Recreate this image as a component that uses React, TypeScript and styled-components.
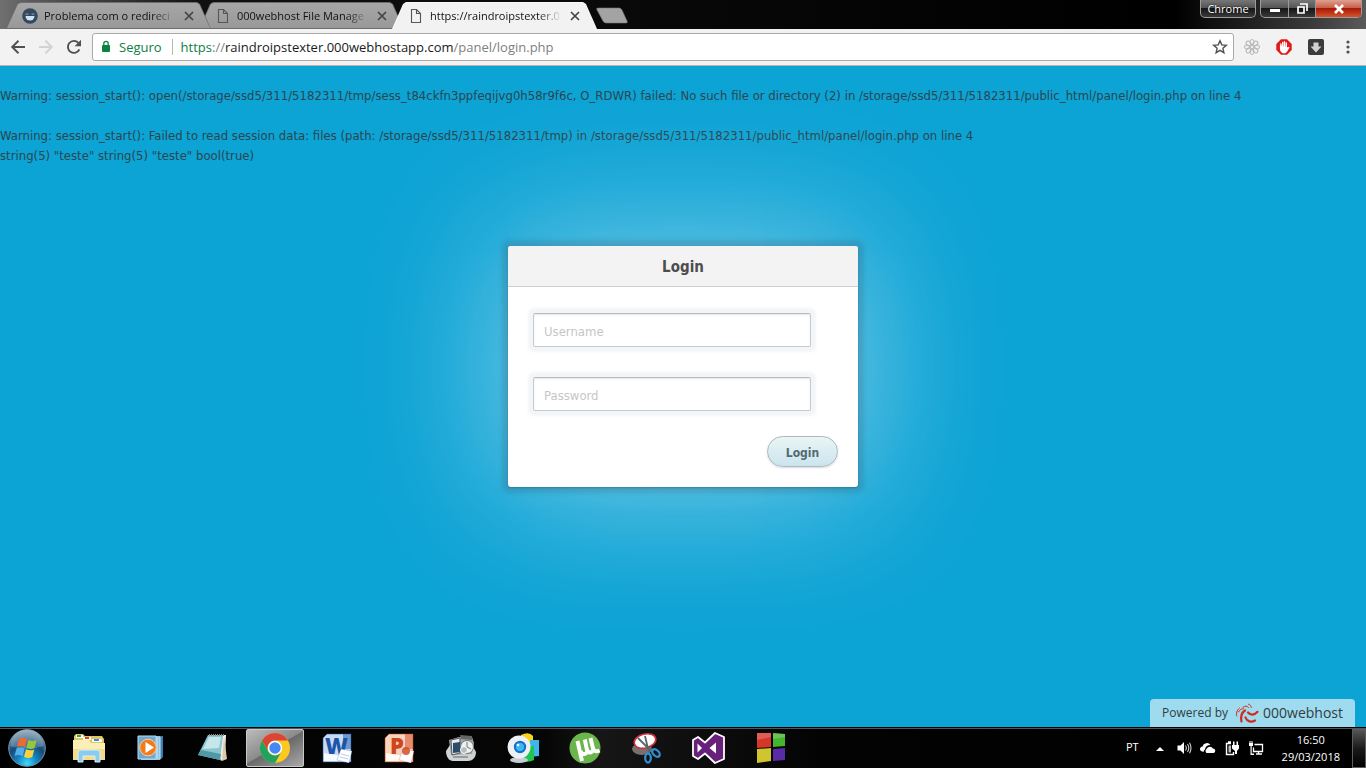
import React from "react";
import styled, { createGlobalStyle, css } from "styled-components";

const ui = `"Open Sans", "Noto Sans", sans-serif`;
const body = `"DejaVu Sans Condensed", "DejaVu Sans", sans-serif`;

const GlobalStyle = createGlobalStyle`
  *, *::before, *::after { box-sizing: border-box; }
  body { margin: 0; background: #0ca3d5; }
  button, input { font: inherit; }
  button { border: 0; padding: 0; background: none; cursor: pointer; }
  svg { display: block; flex: none; }
`;

const Screen = styled.div`
  display: flex;
  flex-direction: column;
  min-height: 100vh;
  overflow: hidden;
`;

/* ---------- Browser window frame ---------- */

const TitleBar = styled.header`
  display: flex;
  align-items: flex-start;
  height: 29px;
  padding: 0 4px 0 6px;
  font: 11px/16px ${ui};
  background: linear-gradient(90deg, #707070 0, #5c5c5c 30px, #111 200px, #050505 60%, #000 86%, #3a3a3a 96%, #5a5a5a 100%);
`;

const TabStrip = styled.div`
  display: flex;
  flex: 1;
  min-width: 0;
`;

const Tab = styled.div<{ $active?: boolean; $level: number }>`
  position: relative;
  z-index: ${(p) => p.$level};
  display: flex;
  align-items: center;
  gap: 6px;
  width: 205px;
  height: 27px;
  margin: 2px -12px 0 0;
  padding: 0 15px 0 16px;
  color: #111;
  background: ${(p) => (p.$active ? "#f9f9f9" : "#6d6d6d")};
  clip-path: polygon(0 100%, 11px 2px, 14px 0, calc(100% - 14px) 0, calc(100% - 11px) 2px, 100% 100%);

  &::before {
    content: "";
    position: absolute;
    z-index: -1;
    inset: 1px 1px ${(p) => (p.$active ? "0" : "1px")} 1px;
    background: ${(p) => (p.$active ? "#f2f2f2" : "linear-gradient(#a6a6a6, #999)")};
    clip-path: polygon(0 100%, 11px 1px, 14px 0, calc(100% - 14px) 0, calc(100% - 11px) 1px, 100% 100%);
  }
`;

const TabTitle = styled.span`
  flex: 1;
  min-width: 0;
  overflow: hidden;
  white-space: nowrap;
  mask-image: linear-gradient(90deg, #000 calc(100% - 24px), transparent);
`;

const TabClose = styled.button`
  display: grid;
  place-items: center;
  width: 14px;
  height: 16px;
`;

const NewTab = styled.button`
  width: 34px;
  height: 17px;
  margin: 7px 0 0 10px;
`;

const WindowButtons = styled.div`
  display: flex;
  gap: 4px;
`;

const glass = css`
  border: 1px solid #9c9c9c;
  border-top: 0;
  border-radius: 0 0 5px 5px;
  background: linear-gradient(#777 0, #555 45%, #161616 50%, #3a3a3a 100%);
`;

const Profile = styled.button`
  ${glass}
  width: 56px;
  height: 18px;
  color: #fff;
  text-shadow: 0 0 2px #000;
`;

const Caption = styled.div`
  ${glass}
  display: flex;
  height: 18px;
  overflow: hidden;
`;

const CaptionButton = styled.button<{ $close?: boolean }>`
  display: grid;
  place-items: center;
  width: ${(p) => (p.$close ? 46 : 27)}px;
  background: ${(p) => (p.$close ? "linear-gradient(#e0a090 0, #c9604c 45%, #a81a08 50%, #d4542c 100%)" : "none")};

  & + & {
    border-left: 1px solid #999;
  }
`;

const Toolbar = styled.nav`
  display: flex;
  align-items: center;
  height: 37px;
  padding: 0 10px 1px;
  background: #f2f2f2;
  border-bottom: 1px solid #b6b4b6;
`;

const NavButton = styled.button`
  display: grid;
  place-items: center;
  width: 16px;
  height: 24px;
  margin-right: 12px;

  &:nth-of-type(3) {
    margin-right: 10px;
  }
`;

const Omnibox = styled.div`
  display: flex;
  flex: 1;
  align-items: center;
  min-width: 0;
  height: 28px;
  padding: 0 5px 0 8px;
  font: 13px/20px ${ui};
  color: #0b8043;
  background: #fff;
  border: 1px solid #a9a9a9;
  border-radius: 3px;
`;

const Secure = styled.span`
  margin-left: 8px;
  padding-right: 10px;
  line-height: 16px;
  border-right: 1px solid #b5b5b5;
`;

const Url = styled.div`
  flex: 1;
  min-width: 0;
  overflow: hidden;
  margin-left: 8px;
  white-space: nowrap;
  color: #808080;
`;

const Scheme = styled.span`
  color: #0b8043;
`;

const Host = styled.span`
  color: #1a1a1a;
`;

const Extensions = styled.div`
  display: flex;
  align-items: center;
  gap: 16px;
  margin-left: 10px;
`;

const IconButton = styled.button`
  display: grid;
  place-items: center;
  width: 16px;
  height: 16px;
`;

/* ---------- Web page ---------- */

const Page = styled.main`
  display: flex;
  flex: 1;
  flex-direction: column;
  background: #0ca3d5;
  font: 13px/20px ${body};
  color: #333;
`;

const Warnings = styled.div`
  padding-top: 20px;
  color: #2a4650;
`;

const Message = styled.p`
  margin: 0 0 20px;

  &:last-child {
    margin: 0;
  }
`;

const Card = styled.form`
  align-self: center;
  width: 350px;
  max-width: 100%;
  margin: 80px 0 40px;
  background: #fff;
  border-radius: 3px;
  box-shadow: 0 1px 2px rgba(0, 0, 0, 0.2), 0 0 4px 6px rgba(60, 60, 80, 0.17),
    0 0 140px 12px rgba(255, 255, 255, 0.45);
`;

const CardTitle = styled.h1`
  margin: 0;
  padding: 11px 0 9px;
  font-size: 15px;
  line-height: 20px;
  text-align: center;
  color: #4d4d4d;
  background: #f3f3f3;
  border-bottom: 1px solid #cfcfcf;
  border-radius: 3px 3px 0 0;
`;

const Fields = styled.div`
  display: flex;
  flex-direction: column;
  gap: 30px;
  padding: 26px 47px 25px 25px;
`;

const Field = styled.input`
  width: 100%;
  height: 34px;
  padding: 2px 10px 0;
  color: #444;
  background: #fff;
  border: 1px solid #c4ccd1;
  border-top-color: #b5bbbf;
  border-radius: 2px;
  outline: 0;
  box-shadow: 0 0 3px 5px #f3f5f6, inset 0 1px 2px rgba(0, 0, 0, 0.1);

  &::placeholder {
    color: #c6c6c6;
    opacity: 1;
  }
`;

const Actions = styled.div`
  display: flex;
  justify-content: flex-end;
  padding: 0 20px 20px;
`;

const Submit = styled.button`
  width: 71px;
  height: 31px;
  padding-top: 2px;
  font-size: 12px;
  font-weight: bold;
  color: #526b75;
  background: linear-gradient(#e9f5f5, #cce4ee);
  border: 1px solid #adb9be;
  border-radius: 16px;
  box-shadow: 0 1px 2px rgba(0, 0, 0, 0.15);
`;

const HostBadge = styled.a`
  display: flex;
  align-items: center;
  align-self: flex-end;
  height: 28px;
  margin: auto 11px 0 0;
  padding: 0 12px;
  font: 12px/20px ${ui};
  color: #333c42;
  text-decoration: none;
  background: #9edbee;
  border-radius: 4px 4px 0 0;

  svg {
    margin: 0 4px 0 7px;
  }
`;

const Brand = styled.span`
  font-size: 14px;
`;

/* ---------- Taskbar ---------- */

const Taskbar = styled.footer`
  display: flex;
  align-items: center;
  height: 41px;
  font: 11px/17px ${ui};
  color: #fff;
  background: linear-gradient(90deg, #000 0, #060606 40%, #161616 44%, #030303 60%, #000 100%);
  border-top: 1px solid #000;
  box-shadow: inset 0 1px 0 #555;
`;

const StartButton = styled.button`
  display: grid;
  place-items: center;
  width: 54px;
  height: 40px;
  margin-right: 6px;
`;

const Apps = styled.div`
  display: flex;
  flex: 1;
  gap: 4px;
  height: 38px;
`;

const AppButton = styled.button<{ $active?: boolean }>`
  display: grid;
  place-items: center;
  width: 58px;
  border: 1px solid ${(p) => (p.$active ? "#c9c9c9" : "transparent")};
  border-radius: 2px;
  background: ${(p) => (p.$active ? "linear-gradient(150deg, #bbb 0, #8b8b8b 48%, #696969 50%, #a9a9a9 100%)" : "none")};
`;

const Tray = styled.div`
  display: flex;
  align-items: center;
  gap: 8px;
  margin-right: 12px;
`;

const Language = styled.span`
  margin: 0 5px 4px 0;
`;

const Clock = styled.time`
  margin-left: 10px;
  text-align: center;
`;

const ShowDesktop = styled.button`
  width: 14px;
  height: 39px;
  border: 1px solid #5c5c5c;
  background: linear-gradient(#555, #1a1a1a 50%, #000);
`;

/* ---------- Drawings ---------- */

const CloseIcon = () => (
  <svg width="10" height="10" viewBox="0 0 10 10">
    <path d="M1 1l8 8M9 1l-8 8" stroke="#444" strokeWidth="1.7" />
  </svg>
);

const FileIcon = () => (
  <svg width="16" height="16" viewBox="0 0 16 16">
    <path d="M3.500 1.500h5l4 4v9h-9zM8.500 1.500v4h4" fill="none" stroke="#555" strokeWidth="1.1" />
  </svg>
);

const SmileIcon = () => (
  <svg width="16" height="16" viewBox="0 0 16 16">
    <circle cx="8" cy="8" r="7.800" fill="#34495e" />
    <path d="M3.500 8h9a4.500 4.500 0 0 1-9 0z" fill="#cfe4f2" />
    <path d="M3.500 6.200h9" stroke="#7d93a6" strokeWidth="1.200" strokeDasharray="3 3" />
  </svg>
);

const BackIcon = () => (
  <svg width="16" height="16" viewBox="0 0 16 16">
    <path d="M15 8H2.500M8.500 1.800L2.200 8l6.300 6.200" fill="none" stroke="#505050" strokeWidth="1.9" />
  </svg>
);

const ForwardIcon = () => (
  <svg width="16" height="16" viewBox="0 0 16 16">
    <path d="M1 8h12.500M7.500 1.800L13.800 8l-6.300 6.200" fill="none" stroke="#d2d2d2" strokeWidth="1.9" />
  </svg>
);

const ReloadIcon = () => (
  <svg width="16" height="16" viewBox="0 0 16 16">
    <path d="M13.400 10.300A6 6 0 1 1 12.400 3.900" fill="none" stroke="#505050" strokeWidth="1.9" />
    <path d="M15 .8v6.400H8.600z" fill="#505050" />
  </svg>
);

const LockIcon = () => (
  <svg width="10" height="13" viewBox="0 0 10 13">
    <rect x="1" y="5" width="8" height="7" rx="1" fill="#0b8043" />
    <path d="M2.800 5.500V3.600a2.200 2.200 0 0 1 4.400 0v1.900" fill="none" stroke="#0b8043" strokeWidth="1.3" />
  </svg>
);

const StarIcon = () => (
  <svg width="16" height="16" viewBox="0 0 16 16">
    <path
      d="M8 1.800l1.800 4.100 4.500.4-3.400 3 1 4.400L8 11.400l-3.900 2.300 1-4.400-3.400-3 4.500-.4z"
      fill="none"
      stroke="#505050"
      strokeWidth="1.4"
    />
  </svg>
);

const FlowerIcon = () => (
  <svg width="16" height="16" viewBox="0 0 16 16">
    {[0, 45, 90, 135, 180, 225, 270, 315].map((a) => (
      <ellipse key={a} cx="8" cy="3" rx="2.100" ry="2.500" fill="none" stroke="#b5b5b5" transform={`rotate(${a} 8 8)`} />
    ))}
    <circle cx="8" cy="8" r="1.800" fill="#eee" stroke="#b5b5b5" />
  </svg>
);

const HandIcon = () => (
  <svg width="16" height="16" viewBox="0 0 16 16">
    <path d="M5 .3h6L15.700 5v6L11 15.700H5L.3 11V5z" fill="#e01b1b" />
    <path
      d="M4.500 6.500v3C4.500 12 6 13.800 8 13.800c1.400 0 2.300-.7 3-2l1.800-3.300"
      fill="#fff"
      stroke="#fff"
      strokeWidth="1.200"
      strokeLinecap="round"
    />
    <path d="M4.900 9V5M6.700 9V3.400M8.500 9V2.800M10.300 10V4" stroke="#fff" strokeWidth="1.400" strokeLinecap="round" />
  </svg>
);

const DownloadIcon = () => (
  <svg width="16" height="16" viewBox="0 0 16 16">
    <rect width="16" height="16" rx="2" fill="#3b3b3b" />
    <path d="M5.500 3.500h5v4h3L8 13.500 2.500 7.500h3z" fill="#d4d4d4" />
  </svg>
);

const MenuIcon = () => (
  <svg width="16" height="16" viewBox="0 0 16 16" fill="#505050">
    <circle cx="8" cy="3" r="1.6" />
    <circle cx="8" cy="8" r="1.6" />
    <circle cx="8" cy="13" r="1.6" />
  </svg>
);

const HostLogo = () => (
  <svg width="24" height="20" viewBox="0 0 24 20" fill="none" stroke="#d42a1d" strokeLinecap="round">
    <path d="M4.500 5C1.500 7.500 1 10.500 1.800 13" strokeWidth="1" />
    <path d="M10 7.500C6.800 9.500 5.300 13 6.500 18.500" strokeWidth="2.200" />
    <path d="M10.500 14.500c1.500 4.200 6 5.200 9.500 3" strokeWidth="2.200" />
    <path d="M13 9.500c2.500 3 6.500 2.700 9.500-.7" strokeWidth="2.200" />
    <path d="M8 4.200c2-1.500 4-1.500 5.500.3M13.500 1.200c1.600.3 2.600 1.500 2.800 3.300" strokeWidth="1" />
    <path d="M3.500 9c1-2.300 2.800-3.300 5-3.300" strokeWidth="1" />
  </svg>
);

const StartOrb = () => (
  <svg width="40" height="40" viewBox="0 0 40 40">
    <defs>
      <radialGradient id="orb" cx="50%" cy="92%" r="90%">
        <stop offset="0" stopColor="#3fdcff" />
        <stop offset=".3" stopColor="#1386c4" />
        <stop offset=".6" stopColor="#164a78" />
        <stop offset="1" stopColor="#7f9db2" />
      </radialGradient>
    </defs>
    <circle cx="20" cy="20" r="18.300" fill="url(#orb)" stroke="#7793a6" />
    <path d="M3.500 18a16.500 16.500 0 0 1 33 0c-9 3-22 4-33 0z" fill="#fff" opacity=".22" />
    <path d="M12 11c3-1.600 5.600-1.300 8 .2l-2 8c-2.600-1.400-5-1.600-8-.4z" fill="#ee6a30" />
    <path d="M21.300 12c3 1.500 5.500 1.400 8.500 0l-2.200 8c-2.900 1.300-5.300 1.200-8.200-.2z" fill="#93c83d" />
    <path d="M9.600 20.200c3-1.200 5.400-1 8 .4l-2 7.600c-2.500-1.400-5-1.500-8-.3z" fill="#58aeea" />
    <path d="M19 21.200c2.800 1.400 5.400 1.500 8.300.2l-2 7.700c-3 1.300-5.500 1.200-8.300-.3z" fill="#fdd23c" />
  </svg>
);

const ExplorerIcon = () => (
  <svg width="34" height="32" viewBox="0 0 34 32">
    <path d="M2 4l2-2h7l2 2h17l2 3v20H2z" fill="#e3c462" />
    <path d="M4 3h7v3H4z" fill="#fff" />
    <path d="M5 3h4v2H5z" fill="#2aa84a" />
    <path d="M11 5h8v3h-8z" fill="#fff" />
    <path d="M13 5h4v2h-4z" fill="#d9432b" />
    <path d="M20 7h10v3H20z" fill="#fff" />
    <path d="M22 7h5v2h-5z" fill="#3497d3" />
    <path d="M1 8h16l2 3h14v17H1z" fill="#fbefb5" />
    <path d="M1 17h32v11H1z" fill="#f2dc8a" />
    <path d="M6 30v-9q0-3 3-3h16q3 0 3 3v9h-5v-6H11v6z" fill="#8dcbed" stroke="#d7effb" />
  </svg>
);

const PlayerIcon = () => (
  <svg width="30" height="30" viewBox="0 0 30 30">
    <path d="M8 3h19v21l-3 3H8z" fill="#3a7fae" />
    <path d="M5 3h19v24H5z" fill="#8fc4e4" />
    <path d="M21 4v22M24 4v22" stroke="#cfe7f5" />
    <path d="M2 3h18v23H2z" fill="#6fa9cf" stroke="#b8dcef" />
    <circle cx="12" cy="14.500" r="8.300" fill="#f07c1c" stroke="#fbd0a2" />
    <path d="M9.500 9v11l8.500-5.500z" fill="#fff" />
  </svg>
);

const NotesIcon = () => (
  <svg width="32" height="30" viewBox="0 0 32 30">
    <path d="M12 2h17l-1 23-4 3z" fill="#eeeee8" />
    <path d="M27 4l3 22-5 2z" fill="#d8cda6" />
    <path d="M11 2h15l-3 25L1 22z" fill="#8cc5ce" />
    <path d="M12 4h12l-2 11-16 1z" fill="#c5e7ea" />
    <path d="M1 22l22 5 1-6L4 17z" fill="#4f98a6" />
    <path d="M12 2h16" stroke="#888" strokeWidth="2" strokeDasharray="1 1" />
  </svg>
);

const ChromeIcon = () => (
  <svg width="32" height="32" viewBox="0 0 32 32">
    <circle cx="16" cy="16" r="15" fill="#fbc91f" />
    <path d="M3 8.500A15 15 0 0 1 29 8.500H16a7.500 7.500 0 0 0-6.500 11.200z" fill="#dc4437" />
    <path d="M3 8.500a15 15 0 0 0 13 22.500l6.500-11.300a7.500 7.500 0 0 1-13 0z" fill="#1ea361" />
    <circle cx="16" cy="16" r="7.200" fill="#fff" />
    <circle cx="16" cy="16" r="5.700" fill="#4587f3" />
  </svg>
);

const OfficeIcon = ({ letter, color, pale }: { letter: string; color: string; pale: string }) => (
  <svg width="30" height="30" viewBox="0 0 30 30">
    <path d="M5 1h24v28H1V5z" fill={pale} stroke={color} strokeOpacity=".5" />
    <path d="M21 1h8v15h-8z" fill={color} opacity=".5" />
    <path d="M2 20l18 3v5H2z" fill="#fff" opacity=".85" />
    <text x={letter === "W" ? 3 : 6} y="21" fontFamily="Open Sans, sans-serif" fontSize="22" fontWeight="800" fill={color}>
      {letter}
    </text>
    <path d="M19 16l11 2-3 12-12-3z" fill="#fff" stroke={color} strokeOpacity=".25" />
    {letter === "P" ? (
      <circle cx="22" cy="18" r="4" fill={color} opacity=".8" />
    ) : (
      <path d="M18 24l8 2M19 21l8 2" stroke={color} strokeOpacity=".3" />
    )}
  </svg>
);

const CameraIcon = () => (
  <svg width="32" height="30" viewBox="0 0 32 30">
    <path d="M1 18l4-6h22l4 7c0 6-4 9-8 9H8c-4 0-7-4-7-10z" fill="#cfd3d4" />
    <path d="M4 7l10-3h13l2 6-2 11-21 1z" fill="#9da5a8" />
    <path d="M6 7l9-2v15l-8 2z" fill="#e9eced" stroke="#555" />
    <path d="M8 10l7-1 1 10-8 1z" fill="#2d4b6b" />
    <circle cx="22" cy="14" r="6.500" fill="#eef0f0" stroke="#777" />
    <circle cx="19" cy="17" r="3.500" fill="#b5bec2" stroke="#fff" />
    <path d="M15 2l12 1v4l-11-1z" fill="#666" />
    <path d="M22 9v5l4 2" fill="none" stroke="#777" />
    <path d="M8 24h15" stroke="#858c8f" strokeWidth="1.500" />
  </svg>
);

const WebcamIcon = () => (
  <svg width="34" height="32" viewBox="0 0 34 32">
    <path d="M15 3q8-4 12 1v11H15z" fill="#fbd21d" />
    <path d="M24 8h9v16l-9 1z" fill="#3fb5e8" />
    <path d="M18 14h10v14q-5 3-12 1z" fill="#21c44c" />
    <ellipse cx="13" cy="28" rx="9" ry="3" fill="#c5cdd3" />
    <circle cx="13" cy="15" r="11.500" fill="#edf1f4" />
    <circle cx="14" cy="15" r="6.200" fill="#1a70c9" />
    <circle cx="14" cy="15" r="4" fill="#3bb9f7" />
    <circle cx="12" cy="13" r="1.300" fill="#fff" />
  </svg>
);

const TorrentIcon = () => (
  <svg width="32" height="32" viewBox="0 0 32 32">
    <circle cx="16" cy="16" r="15.500" fill="#6ab54c" />
    <path
      d="M8.500 9L13 29M11.500 19c1 4.500 7.500 4 6.500-1L15.800 7.500M18 18c1.500 4 7 2.500 6-1.500L21.500 6M24 16c.8 3.500 3.500 4 6.500 2.500"
      fill="none"
      stroke="#fff"
      strokeWidth="4"
    />
  </svg>
);

const SnipIcon = () => (
  <svg width="32" height="32" viewBox="0 0 32 32">
    <ellipse cx="11" cy="17" rx="10" ry="6" fill="#77706e" />
    <ellipse cx="14" cy="9" rx="11" ry="7" transform="rotate(-14 14 9)" fill="#fff" stroke="#c9303a" strokeWidth="1.6" />
    <path d="M7 6l14 14M14 4l4 17" stroke="#59666f" strokeWidth="1.8" />
    <ellipse cx="17" cy="26" rx="2.800" ry="4.500" fill="none" stroke="#2f8fd0" strokeWidth="2.3" />
    <ellipse cx="25" cy="21" rx="2.800" ry="4.500" transform="rotate(-45 25 21)" fill="none" stroke="#2f8fd0" strokeWidth="2.3" />
  </svg>
);

const StudioIcon = () => (
  <svg width="34" height="32" viewBox="0 0 34 32">
    <path
      d="M23 1l9 4v22l-9 4-10-9.500L6 27l-5-3V8l5-3 7 5.500z"
      fill="#68217a"
      stroke="#fff"
      strokeWidth="1.8"
      strokeLinejoin="round"
    />
    <path d="M24 10.500v11L17.500 16zM5.500 11.500v9L10 16z" fill="#fff" />
  </svg>
);

const BlocksIcon = () => (
  <svg width="30" height="32" viewBox="0 0 30 32">
    <path d="M1 1h14v14L1 16z" fill="#d6352a" />
    <path d="M17 1l12 1v12l-12 1z" fill="#45b52e" />
    <path d="M1 17l14-1v13L1 31z" fill="#cfc52f" />
    <path d="M17 17l12-1v12l-12 1z" fill="#5a2ba6" />
    <path d="M1 1h14v4L1 8zM17 1l12 1v3l-12 2z" fill="#fff" opacity=".2" />
  </svg>
);

const ArrowUpIcon = () => (
  <svg width="16" height="16" viewBox="0 0 16 16">
    <path d="M4 11l4-4 4 4z" fill="#fff" />
  </svg>
);

const VolumeIcon = () => (
  <svg width="16" height="16" viewBox="0 0 16 16">
    <path d="M1.500 5.500h3L8 2v12l-3.500-3.500h-3z" fill="#fff" />
    <path d="M9.500 5.500q1.700 2.500 0 5M11.500 4q2.600 4 0 8M13.500 2.800q3 5.200 0 10.400" fill="none" stroke="#ccc" strokeWidth="1.1" />
  </svg>
);

const CloudIcon = () => (
  <svg width="16" height="16" viewBox="0 0 16 16">
    <path d="M1 11a2.500 2.500 0 0 1 1.500-4.500A4.500 4.500 0 0 1 10.500 5 5 5 0 0 0 5 9.500 3 3 0 0 0 3.500 12z" fill="#fff" />
    <path d="M6.500 13a2.600 2.600 0 0 1 0-4A3.700 3.700 0 0 1 13 8.500 2.400 2.400 0 0 1 14 13z" fill="#fff" />
  </svg>
);

const PlugIcon = () => (
  <svg width="16" height="16" viewBox="0 0 16 16">
    <path d="M7 3.500H2.500v11h7V12M4 2h3" fill="none" stroke="#fff" strokeWidth="1.4" />
    <path d="M4.500 5.500H7v7H4.500z" fill="#bbb" />
    <path d="M8 5h7v3.500L13 11v3h-2v-3L8 8.500zM9 1.500h1.500V5H9zM12.500 1.500H14V5h-1.500z" fill="#fff" />
  </svg>
);

const NetworkIcon = () => (
  <svg width="16" height="16" viewBox="0 0 16 16">
    <path d="M6.500 4.500h8v7h-9v-4M8 14h6M10.500 11.500V14" fill="none" stroke="#fff" strokeWidth="1.3" />
    <path d="M1 3h4v3H1zM1.500 1h1v2h-1zM3.500 1h1v2h-1zM2.500 6h1.200v7.500H6V15H2.500z" fill="#fff" />
  </svg>
);

/* ---------- Screen ---------- */

const tabs = [
  { title: "Problema com o redireci", icon: <SmileIcon />, level: 2 },
  { title: "000webhost File Manage", icon: <FileIcon />, level: 1 },
  { title: "https://raindroipstexter.0", icon: <FileIcon />, level: 3, active: true },
];

const apps = [
  { name: "Explorer", icon: <ExplorerIcon /> },
  { name: "Media Player", icon: <PlayerIcon /> },
  { name: "Notepad", icon: <NotesIcon /> },
  { name: "Chrome", icon: <ChromeIcon />, active: true },
  { name: "Word", icon: <OfficeIcon letter="W" color="#1c55a8" pale="#c7dcf3" /> },
  { name: "PowerPoint", icon: <OfficeIcon letter="P" color="#d0451b" pale="#f8d3bd" /> },
  { name: "Camera", icon: <CameraIcon /> },
  { name: "Webcam", icon: <WebcamIcon /> },
  { name: "Torrent", icon: <TorrentIcon /> },
  { name: "Snipping Tool", icon: <SnipIcon /> },
  { name: "Visual Studio", icon: <StudioIcon /> },
  { name: "Blocks", icon: <BlocksIcon /> },
];

export default function App() {
  return (
    <Screen>
      <GlobalStyle />
      <TitleBar>
        <TabStrip>
          {tabs.map((t) => (
            <Tab key={t.title} $active={t.active} $level={t.level}>
              {t.icon}
              <TabTitle>{t.title}</TabTitle>
              <TabClose aria-label="Fechar guia">
                <CloseIcon />
              </TabClose>
            </Tab>
          ))}
          <NewTab aria-label="Nova guia">
            <svg width="34" height="17" viewBox="0 0 34 17">
              <path d="M3 1h21q2 0 3 2l5 11q1 2-1 2H11q-2 0-3-2L2 3q-1-2 1-2z" fill="#a3a3a3" stroke="#777" strokeWidth=".6" />
            </svg>
          </NewTab>
        </TabStrip>
        <WindowButtons>
          <Profile>Chrome</Profile>
          <Caption>
            <CaptionButton aria-label="Minimizar">
              <svg width="12" height="12" viewBox="0 0 12 12">
                <path d="M1 6h10v3H1z" fill="#fff" />
              </svg>
            </CaptionButton>
            <CaptionButton aria-label="Restaurar">
              <svg width="12" height="12" viewBox="0 0 12 12">
                <path d="M4 1h7v7M2 4h6v6H2z" fill="none" stroke="#fff" strokeWidth="1.7" />
              </svg>
            </CaptionButton>
            <CaptionButton $close aria-label="Fechar">
              <svg width="12" height="12" viewBox="0 0 12 12">
                <path d="M2 2l8 8M10 2l-8 8" stroke="#fff" strokeWidth="2.6" />
              </svg>
            </CaptionButton>
          </Caption>
        </WindowButtons>
      </TitleBar>

      <Toolbar>
        <NavButton aria-label="Voltar">
          <BackIcon />
        </NavButton>
        <NavButton aria-label="Avançar">
          <ForwardIcon />
        </NavButton>
        <NavButton aria-label="Recarregar">
          <ReloadIcon />
        </NavButton>
        <Omnibox>
          <LockIcon />
          <Secure>Seguro</Secure>
          <Url>
            <Scheme>https</Scheme>://<Host>raindroipstexter.000webhostapp.com</Host>/panel/login.php
          </Url>
          <IconButton aria-label="Favoritar">
            <StarIcon />
          </IconButton>
        </Omnibox>
        <Extensions>
          <IconButton aria-label="Extensão">
            <FlowerIcon />
          </IconButton>
          <IconButton aria-label="Bloqueador">
            <HandIcon />
          </IconButton>
          <IconButton aria-label="Downloads">
            <DownloadIcon />
          </IconButton>
          <IconButton aria-label="Menu">
            <MenuIcon />
          </IconButton>
        </Extensions>
      </Toolbar>

      <Page>
        <Warnings>
          <Message>
            Warning: session_start(): open(/storage/ssd5/311/5182311/tmp/sess_t84ckfn3ppfeqijvg0h58r9f6c, O_RDWR) failed: No
            such file or directory (2) in /storage/ssd5/311/5182311/public_html/panel/login.php on line 4
          </Message>
          <Message>
            Warning: session_start(): Failed to read session data: files (path: /storage/ssd5/311/5182311/tmp) in
            /storage/ssd5/311/5182311/public_html/panel/login.php on line 4
            <br />
            string(5) "teste" string(5) "teste" bool(true)
          </Message>
        </Warnings>
        <Card onSubmit={(e) => e.preventDefault()}>
          <CardTitle>Login</CardTitle>
          <Fields>
            <Field type="text" placeholder="Username" aria-label="Username" />
            <Field type="password" placeholder="Password" aria-label="Password" />
          </Fields>
          <Actions>
            <Submit type="submit">Login</Submit>
          </Actions>
        </Card>
        <HostBadge href="#">
          Powered by <HostLogo />
          <Brand>000webhost</Brand>
        </HostBadge>
      </Page>

      <Taskbar>
        <StartButton aria-label="Iniciar">
          <StartOrb />
        </StartButton>
        <Apps>
          {apps.map((a) => (
            <AppButton key={a.name} $active={a.active} aria-label={a.name}>
              {a.icon}
            </AppButton>
          ))}
        </Apps>
        <Tray>
          <Language>PT</Language>
          <ArrowUpIcon />
          <VolumeIcon />
          <CloudIcon />
          <PlugIcon />
          <NetworkIcon />
          <Clock>
            16:50
            <br />
            29/03/2018
          </Clock>
        </Tray>
        <ShowDesktop aria-label="Mostrar área de trabalho" />
      </Taskbar>
    </Screen>
  );
}
